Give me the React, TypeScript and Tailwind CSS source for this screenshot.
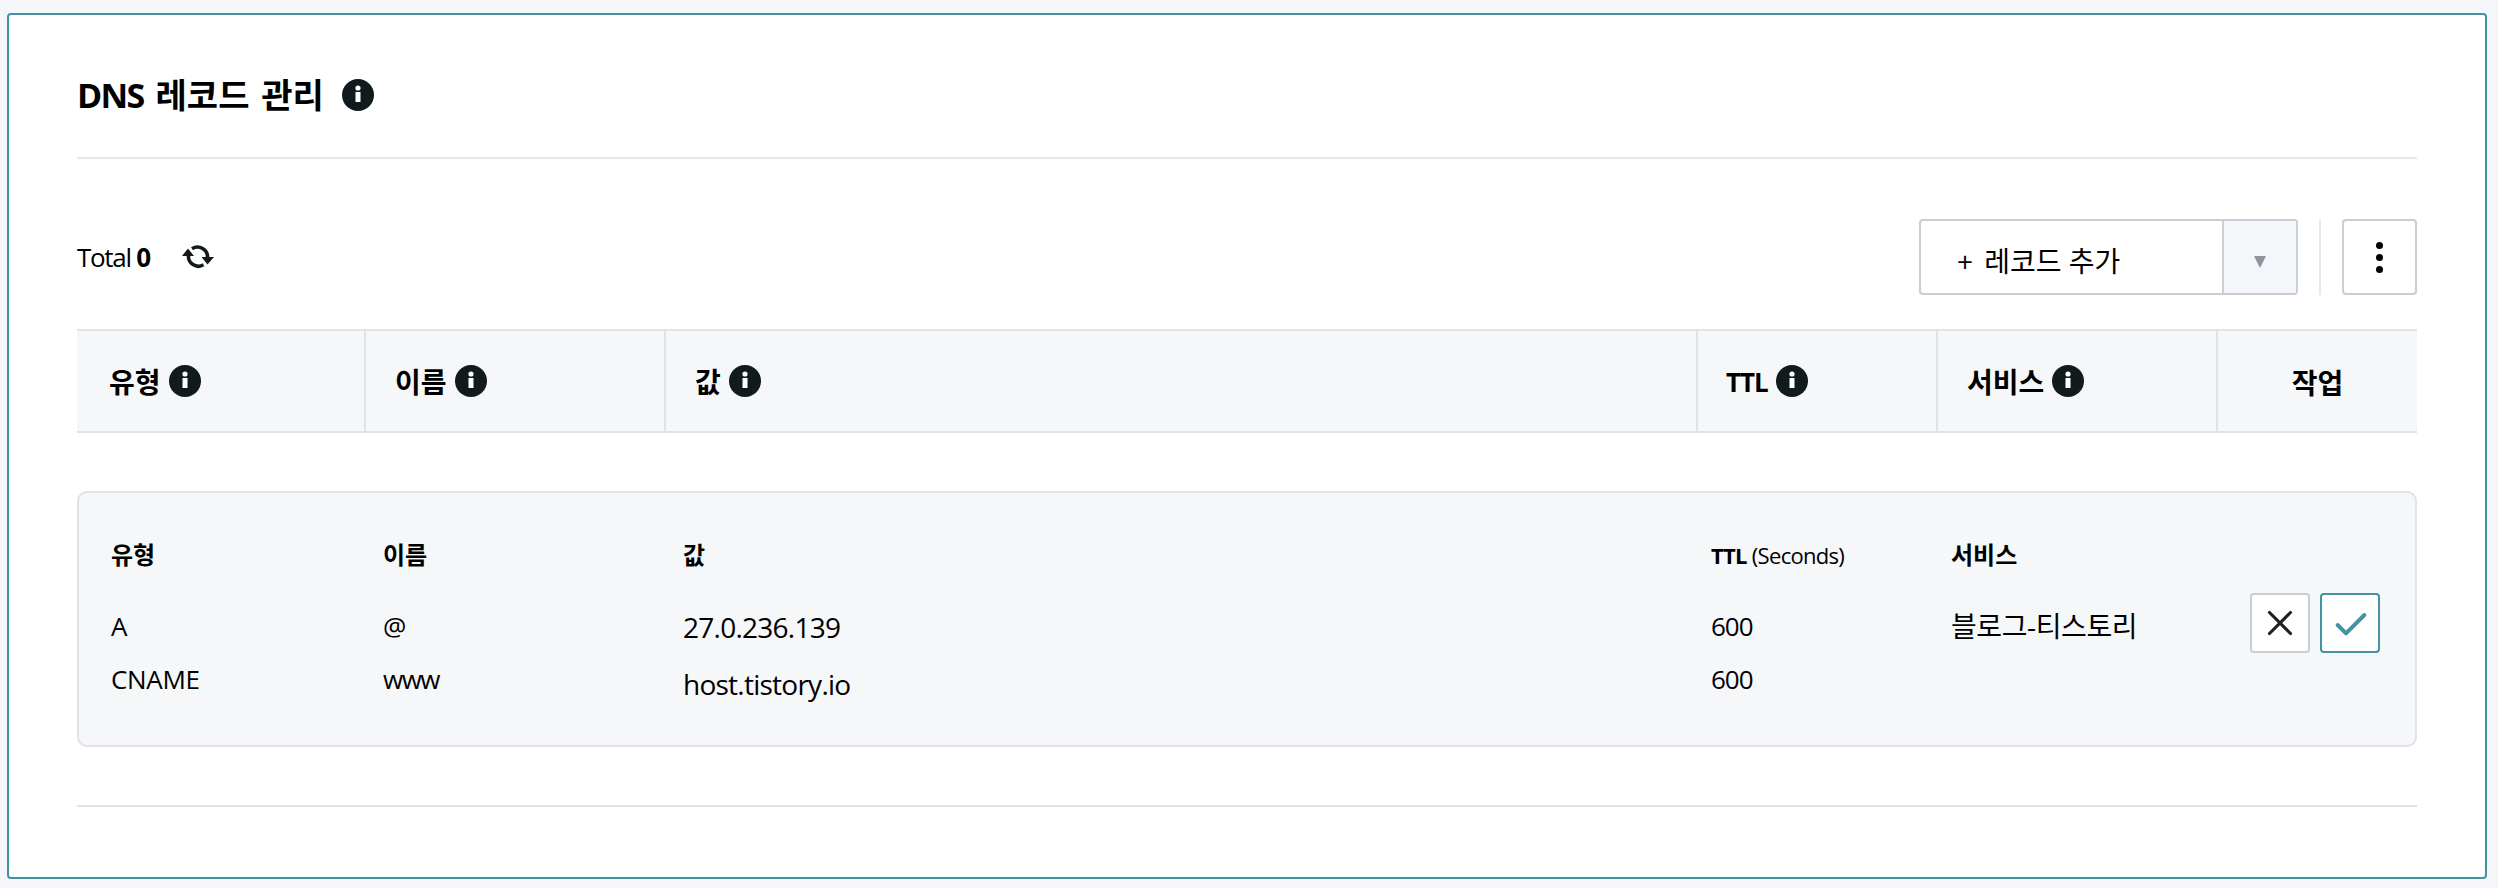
import { Check, X } from "lucide-react";

const font = "font-['Open_Sans','Noto_Sans_CJK_KR',sans-serif]";

function InfoIcon() {
  return (
    <svg viewBox="0 0 32 32" className="h-[32px] w-[32px] shrink-0">
      <circle cx="16" cy="16" r="16" fill="#111a1c" />
      <circle cx="16" cy="9" r="2.6" fill="#fff" />
      <rect x="13.5" y="13" width="5" height="10" fill="#fff" />
    </svg>
  );
}

function RefreshIcon() {
  return (
    <svg viewBox="0 0 44 36" className="h-[36px] w-[44px]">
      <path d="M15 9.8A10 10 0 0 1 30.5 19" fill="none" stroke="#111a1c" strokeWidth="3.6" />
      <path d="M11.5 16A10 10 0 0 0 26.5 25.8" fill="none" stroke="#111a1c" strokeWidth="3.6" />
      <path d="M5 17h12l-6-7.5z" fill="#111a1c" />
      <path d="M24.5 18h12.5l-6.5 7.5z" fill="#111a1c" />
    </svg>
  );
}

function HeadCell({ label, width, pad = "pl-[29px]", latin = false }: { label: string; width: string; pad?: string; latin?: boolean }) {
  return (
    <div className={`${width} ${pad} flex items-center gap-[8px] border-r-2 border-[#dfe3e8]`}>
      <span className={`${latin ? "text-[26px] tracking-[-1px]" : "text-[28px]"} mt-[2px] font-bold leading-none text-black`}>{label}</span>
      <InfoIcon />
    </div>
  );
}

export default function App() {
  return (
    <div className={`${font} min-h-screen bg-[#f4f6f9] pt-[13px] pb-[9px] pl-[7px] pr-[11px] text-black`}>
      <div className="h-[866px] rounded-[4px] border-2 border-[#4393a3] bg-white px-[68px]">
        <div className="flex h-[144px] items-center gap-[18px] border-b-2 border-[#e5e8ec] pt-[18px]">
          <h1 className="text-[34px] font-bold leading-none [word-spacing:3px]">
            <span className="tracking-[-1.6px]">DNS</span> 레코드 관리
          </h1>
          <InfoIcon />
        </div>

        <div className="flex h-[170px] items-center justify-between pt-[26px]">
          <div className="flex items-center gap-[27px]">
            <span className="text-[26px] tracking-[-1.3px]">
              Total <b>0</b>
            </span>
            <RefreshIcon />
          </div>
          <div className="flex items-center">
            <div className="flex h-[76px] w-[379px] rounded-[4px] border-2 border-[#c8ced6]">
              <div className="flex-1 pl-[36px] pt-[4px] text-[28px] leading-[72px]">
                <span className="mr-[4px]">+</span> 레코드 추가
              </div>
              <div className="flex w-[74px] items-center justify-center border-l-2 border-[#c8ced6] bg-[#f4f6f9]">
                <span className="mt-[10px] h-0 w-0 border-x-[6px] border-t-[12px] border-x-transparent border-t-[#8e959c]" />
              </div>
            </div>
            <div className="mx-[21px] h-[76px] w-[2px] bg-[#e5e8ec]" />
            <div className="flex h-[76px] w-[75px] flex-col items-center justify-center gap-[5px] rounded-[4px] border-2 border-[#c8ced6]">
              <span className="h-[7px] w-[7px] rounded-full bg-black" />
              <span className="h-[7px] w-[7px] rounded-full bg-black" />
              <span className="h-[7px] w-[7px] rounded-full bg-black" />
            </div>
          </div>
        </div>

        <div className="flex h-[104px] border-y-2 border-[#dfe3e8] bg-[#f5f7f9]">
          <HeadCell label="유형" width="w-[289px]" pad="pl-[32px]" />
          <HeadCell label="이름" width="w-[300px]" />
          <HeadCell label="값" width="w-[1032px]" />
          <HeadCell label="TTL" width="w-[240px]" pad="pl-[28px]" latin />
          <HeadCell label="서비스" width="w-[280px]" />
          <div className="flex flex-1 items-center justify-center pt-[4px] text-[28px] font-bold">작업</div>
        </div>

        <div className="mt-[58px] flex h-[256px] rounded-[10px] border-2 border-[#dfe3e8] bg-[#f5f7f9] pl-[32px] pt-[44px]">
          <div className="w-[272px]">
            <div className="text-[24px] font-bold leading-[36px]">유형</div>
            <div className="mt-[34px] text-[26px] leading-[38px] tracking-[-0.3px]">A</div>
            <div className="mt-[15px] text-[26px] leading-[38px] tracking-[-0.3px]">CNAME</div>
          </div>
          <div className="w-[300px]">
            <div className="text-[24px] font-bold leading-[36px]">이름</div>
            <div className="mt-[34px] text-[26px] leading-[38px] tracking-[-0.3px]">@</div>
            <div className="mt-[15px] text-[26px] leading-[38px] tracking-[-1.5px]">www</div>
          </div>
          <div className="w-[1028px]">
            <div className="text-[24px] font-bold leading-[36px]">값</div>
            <div className="mt-[35px] text-[28px] leading-[38px] tracking-[-0.75px]">27.0.236.139</div>
            <div className="mt-[19px] text-[28px] leading-[38px] tracking-[-0.75px]">host.tistory.io</div>
          </div>
          <div className="w-[240px]">
            <div className="text-[22px] leading-[36px] tracking-[-0.7px]">
              <b>TTL</b> (Seconds)
            </div>
            <div className="mt-[34px] text-[26px] leading-[38px] tracking-[-1px]">600</div>
            <div className="mt-[15px] text-[26px] leading-[38px] tracking-[-1px]">600</div>
          </div>
          <div className="w-[299px]">
            <div className="text-[24px] font-bold leading-[36px]">서비스</div>
            <div className="mt-[34px] text-[28px] leading-[38px] tracking-[-0.4px]">블로그-티스토리</div>
          </div>
          <div className="mt-[56px] flex gap-[10px] self-start">
            <button className="flex h-[60px] w-[60px] items-center justify-center rounded-[4px] border-2 border-[#c8ced6] bg-white">
              <X className="h-[42px] w-[42px] text-[#1c2224]" strokeWidth={1.8} />
            </button>
            <button className="flex h-[60px] w-[60px] items-center justify-center rounded-[4px] border-2 border-[#4393a3] bg-white">
              <Check className="ml-[2px] mt-[3px] h-[40px] w-[40px] shrink-0 text-[#4393a3]" strokeWidth={2.4} />
            </button>
          </div>
        </div>

        <div className="mt-[58px] border-t-2 border-[#dfe3e8]" />
      </div>
    </div>
  );
}
